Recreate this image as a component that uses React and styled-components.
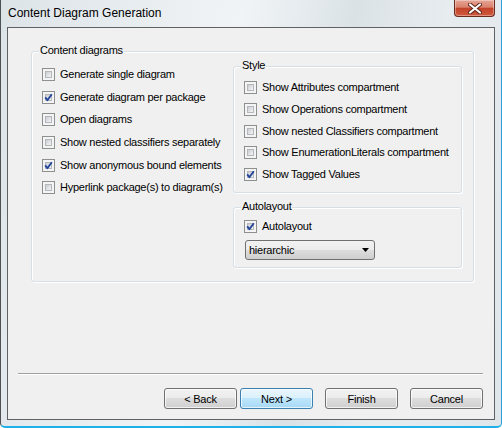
import React from "react";
import styled, { createGlobalStyle } from "styled-components";

const GlobalStyle = createGlobalStyle`
  html, body {
    margin: 0;
    padding: 0;
    background: #ffffff;
  }
  body {
    font-family: "Liberation Sans", Arial, sans-serif;
    font-size: 11px;
    color: #000;
  }
`;

const leftItems = [
  { label: "Generate single diagram", checked: false },
  { label: "Generate diagram per package", checked: true },
  { label: "Open diagrams", checked: false },
  { label: "Show nested classifiers separately", checked: false },
  { label: "Show anonymous bound elements", checked: true },
  { label: "Hyperlink package(s) to diagram(s)", checked: false },
];

const styleItems = [
  { label: "Show Attributes compartment", checked: false },
  { label: "Show Operations compartment", checked: false },
  { label: "Show nested Classifiers compartment", checked: false },
  { label: "Show EnumerationLiterals compartment", checked: false },
  { label: "Show Tagged Values", checked: true },
];

const Check = ({ checked, label, rowHeight }) => (
  <CheckRow $h={rowHeight}>
    <Box>
      {checked && (
        <svg width="11" height="11" viewBox="0 0 11 11">
          <polyline
            points="2.2,5.4 4.4,8.2 8.8,2.2"
            fill="none"
            stroke="#23469a"
            strokeWidth="1.9"
            strokeLinejoin="round"
          />
        </svg>
      )}
    </Box>
    <Label>{label}</Label>
  </CheckRow>
);

const App = () => {
  return (
    <>
      <GlobalStyle />
      <Window>
        <TitleBar>
          <Title>Content Diagram Generation</Title>
          <CloseButton>
            <svg width="14" height="11" viewBox="0 0 14 11">
              <path
                d="M2 1.5 L12 9.5 M12 1.5 L2 9.5"
                stroke="#5b2418"
                strokeWidth="4"
                strokeLinecap="round"
              />
              <path
                d="M2 1.5 L12 9.5 M12 1.5 L2 9.5"
                stroke="#ffffff"
                strokeWidth="2.2"
                strokeLinecap="round"
              />
            </svg>
          </CloseButton>
        </TitleBar>
        <Client>
          <OuterGroup>
            <Caption>Content diagrams</Caption>
            <LeftColumn>
              {leftItems.map((it) => (
                <Check key={it.label} {...it} rowHeight={22.7} />
              ))}
            </LeftColumn>
            <RightColumn>
              <StyleGroup>
                <Caption>Style</Caption>
                {styleItems.map((it) => (
                  <Check key={it.label} {...it} rowHeight={21.65} />
                ))}
              </StyleGroup>
              <LayoutGroup>
                <Caption>Autolayout</Caption>
                <Check label="Autolayout" checked rowHeight={21.65} />
                <Select>
                  <span>hierarchic</span>
                  <svg width="7" height="4" viewBox="0 0 7 4">
                    <polygon points="0,0 7,0 3.5,4" fill="#000" />
                  </svg>
                </Select>
              </LayoutGroup>
            </RightColumn>
          </OuterGroup>
          <Footer>
            <Separator />
            <ButtonRow>
              <Button>&lt; Back</Button>
              <Button $primary $gap={3}>
                Next &gt;
              </Button>
              <Button $gap={12}>Finish</Button>
              <Button $gap={12}>Cancel</Button>
            </ButtonRow>
          </Footer>
        </Client>
      </Window>
    </>
  );
};
export default App;

const Window = styled.div`
  width: 502px;
  height: 428px;
  box-sizing: border-box;
  display: flex;
  flex-direction: column;
  padding: 0 6px 6px 6px;
  border-left: 1px solid #4e5154;
  border-right: 1px solid #2a9fd8;
  border-bottom: 2px solid #1eb0e8;
  border-radius: 0 0 5px 5px;
  background: linear-gradient(
    100deg,
    #dde4e8 0%,
    #e8edf0 25%,
    #f1f4f6 42%,
    #e6ecef 52%,
    #dbe2e6 62%,
    #e7ecef 78%,
    #dfe6ea 100%
  );
`;

const TitleBar = styled.div`
  height: 27px;
  flex: none;
  display: flex;
  justify-content: space-between;
  align-items: flex-start;
`;

const Title = styled.div`
  font-family: "Liberation Sans", Arial, sans-serif;
  font-size: 12px;
  line-height: 27px;
  padding-left: 1px;
  color: #000;
`;

const CloseButton = styled.div`
  width: 41px;
  height: 17px;
  box-sizing: border-box;
  display: flex;
  align-items: center;
  justify-content: center;
  border: 1px solid #6a2a1e;
  border-top: none;
  border-radius: 0 0 4px 4px;
  background: linear-gradient(
    #e6a594 0%,
    #d9826d 45%,
    #c3432a 52%,
    #cf5a3e 100%
  );
  box-shadow: inset 0 0 0 1px rgba(255, 255, 255, 0.35);
`;

const Client = styled.div`
  flex: 1;
  display: flex;
  flex-direction: column;
  border: 1px solid #5f6163;
  background: #f0f0f0;
  padding: 23px 0 10px 0;
`;

const Group = styled.div`
  position: relative;
  box-sizing: border-box;
  border: 1px solid #d5dfe5;
  border-radius: 3px;
  box-shadow: inset 1px 1px 0 #ffffff, 1px 1px 0 #ffffff;
`;

const OuterGroup = styled(Group)`
  margin: 0 20px 0 23px;
  height: 231px;
  display: flex;
  justify-content: space-between;
  padding: 11px 11px 0 10px;
`;

const Caption = styled.span`
  position: absolute;
  top: -8px;
  left: 7px;
  padding: 0 1px;
  line-height: 13px;
  letter-spacing: -0.25px;
  background: #f0f0f0;
`;

const LeftColumn = styled.div`
  display: flex;
  flex-direction: column;
`;

const RightColumn = styled.div`
  width: 229px;
  margin-top: 3px;
  display: flex;
  flex-direction: column;
  gap: 14px;
`;

const StyleGroup = styled(Group)`
  height: 127px;
  padding: 10px 0 0 10px;
`;

const LayoutGroup = styled(Group)`
  height: 61px;
  padding: 8px 0 0 10px;
`;

const CheckRow = styled.div`
  height: ${(p) => p.$h}px;
  display: flex;
  align-items: center;
  gap: 5px;
`;

const Box = styled.span`
  position: relative;
  flex: none;
  width: 13px;
  height: 13px;
  box-sizing: border-box;
  border: 1px solid #8e8f8f;
  background: #f4f4f4;
  &::before {
    content: "";
    position: absolute;
    inset: 2px;
    border: 1px solid #b4b8bd;
    background: linear-gradient(135deg, #c9ccd1, #f6f6f7);
  }
  svg {
    position: absolute;
    left: 0;
    top: 0;
  }
`;

const Label = styled.span`
  white-space: nowrap;
  letter-spacing: -0.25px;
  line-height: 13px;
`;

const Select = styled.div`
  width: 130px;
  height: 20px;
  box-sizing: border-box;
  margin: 2px 0 0 1px;
  padding: 0 5px 0 3px;
  display: flex;
  align-items: center;
  justify-content: space-between;
  border: 1px solid #707070;
  border-radius: 3px;
  background: linear-gradient(#f2f2f2 0%, #ebebeb 50%, #dddddd 50%, #cfcfcf 100%);
  letter-spacing: -0.25px;
`;

const Footer = styled.div`
  margin-top: auto;
  padding: 0 11px 0 10px;
`;

const Separator = styled.div`
  height: 1px;
  background: #a0a0a0;
  border-bottom: 1px solid #ffffff;
  margin-bottom: 13px;
`;

const ButtonRow = styled.div`
  display: flex;
  justify-content: flex-end;
`;

const Button = styled.div`
  width: 73px;
  height: 21px;
  box-sizing: border-box;
  margin-left: ${(p) => p.$gap || 0}px;
  display: flex;
  align-items: center;
  justify-content: center;
  border: 1px solid ${(p) => (p.$primary ? "#3c7fb1" : "#707070")};
  border-radius: 3px;
  letter-spacing: -0.2px;
  background: ${(p) =>
    p.$primary
      ? "linear-gradient(#eaf6fd 0%, #d9f0fc 50%, #bee6fd 50%, #a7d9f5 100%)"
      : "linear-gradient(#f2f2f2 0%, #ebebeb 50%, #dddddd 50%, #cfcfcf 100%)"};
  box-shadow: inset 0 0 0 1px rgba(255, 255, 255, 0.7);
`;
